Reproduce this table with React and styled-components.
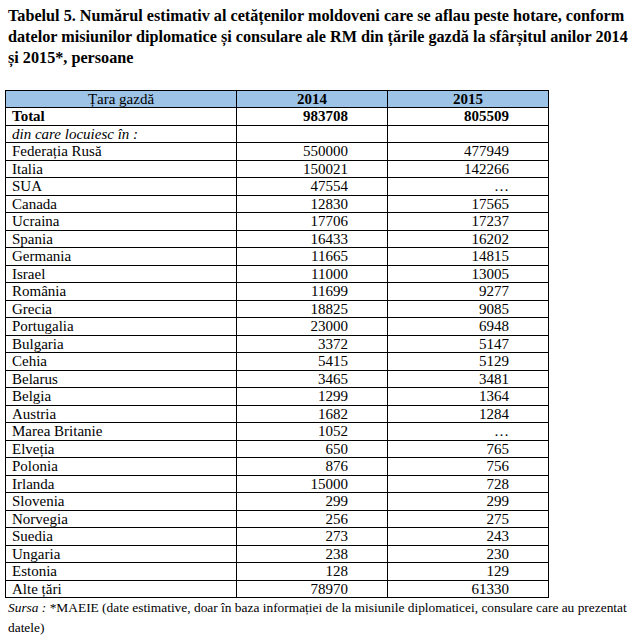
import React from "react";
import styled, { createGlobalStyle } from "styled-components";

const Global = createGlobalStyle`
  html, body { margin: 0; padding: 0; background: #fff; }
  body { font-family: "Liberation Serif", "Times New Roman", serif; color: #000; }
`;

const Page = styled.div`
  width: 637px;
  height: 640px;
  padding: 6px 0 0 5px;
  box-sizing: border-box;
  overflow: hidden;
`;

const Title = styled.h1`
  margin: 0 0 21px 3px;
  font-size: 16.2px;
  line-height: 21px;
  font-weight: bold;
  white-space: nowrap;
`;

const Table = styled.table`
  border-collapse: collapse;
  table-layout: fixed;
  width: 543px;
  font-size: 15px;
`;

const Th = styled.th`
  background: #9dc3e6;
  border: 1px solid #000;
  height: 16px;
  padding: 0;
  line-height: 16px;
  font-weight: ${(p) => (p.$bold ? "bold" : "normal")};
  text-align: center;
`;

const Td = styled.td`
  border: 1px solid #000;
  height: 16.5px;
  padding: ${(p) => (p.$num ? "0 39px 0 0" : "0 0 0 6px")};
  line-height: 16px;
  text-align: ${(p) => (p.$num ? "right" : "left")};
  font-weight: ${(p) => (p.$bold ? "bold" : "normal")};
  font-style: ${(p) => (p.$italic ? "italic" : "normal")};
  white-space: nowrap;
`;

const Source = styled.p`
  margin: 0 0 0 3px;
  font-size: 13.4px;
  line-height: 20px;
  white-space: nowrap;
`;

const rows = [
  ["Federația Rusă", "550000", "477949"],
  ["Italia", "150021", "142266"],
  ["SUA", "47554", "…"],
  ["Canada", "12830", "17565"],
  ["Ucraina", "17706", "17237"],
  ["Spania", "16433", "16202"],
  ["Germania", "11665", "14815"],
  ["Israel", "11000", "13005"],
  ["România", "11699", "9277"],
  ["Grecia", "18825", "9085"],
  ["Portugalia", "23000", "6948"],
  ["Bulgaria", "3372", "5147"],
  ["Cehia", "5415", "5129"],
  ["Belarus", "3465", "3481"],
  ["Belgia", "1299", "1364"],
  ["Austria", "1682", "1284"],
  ["Marea Britanie", "1052", "…"],
  ["Elveția", "650", "765"],
  ["Polonia", "876", "756"],
  ["Irlanda", "15000", "728"],
  ["Slovenia", "299", "299"],
  ["Norvegia", "256", "275"],
  ["Suedia", "273", "243"],
  ["Ungaria", "238", "230"],
  ["Estonia", "128", "129"],
  ["Alte țări", "78970", "61330"],
];

export default function App() {
  return (
    <Page>
      <Global />
      <Title>
        Tabelul 5. Numărul estimativ al cetățenilor moldoveni care se aflau peste hotare, conform
        <br />
        datelor misiunilor diplomatice și consulare ale RM din țările gazdă la sfârșitul anilor 2014
        <br />
        și 2015*, persoane
      </Title>
      <Table>
        <colgroup>
          <col style={{ width: "231px" }} />
          <col style={{ width: "151px" }} />
          <col style={{ width: "161px" }} />
        </colgroup>
        <thead>
          <tr>
            <Th>Țara gazdă</Th>
            <Th $bold>2014</Th>
            <Th $bold>2015</Th>
          </tr>
        </thead>
        <tbody>
          <tr>
            <Td $bold>Total</Td>
            <Td $num $bold>983708</Td>
            <Td $num $bold>805509</Td>
          </tr>
          <tr>
            <Td $italic>din care locuiesc în :</Td>
            <Td />
            <Td />
          </tr>
          {rows.map(([c, a, b]) => (
            <tr key={c}>
              <Td>{c}</Td>
              <Td $num>{a}</Td>
              <Td $num>{b}</Td>
            </tr>
          ))}
        </tbody>
      </Table>
      <Source>
        <i>Sursa :</i> *MAEIE (date estimative, doar în baza informației de la misiunile diplomaticei, consulare care au prezentat
        <br />
        datele)
      </Source>
    </Page>
  );
}
